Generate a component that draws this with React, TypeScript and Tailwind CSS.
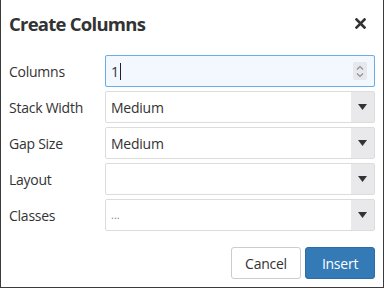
import React from "react";

const fields = [
  { label: "Stack Width", value: "Medium" },
  { label: "Gap Size", value: "Medium" },
  { label: "Layout", value: "" },
  { label: "Classes", value: "..." },
];

function SelectField({ value }: { value: string }) {
  return (
    <div className="flex h-[32px] flex-1 items-stretch rounded-[2px] border border-[#dcdcdc] bg-white">
      <div
        className={
          value === "..."
            ? "flex flex-1 items-center px-[5px] text-[11px] text-[#888]"
            : "flex flex-1 items-center px-[5px] text-[14px] tracking-[-0.25px] text-[#333]"
        }
      >
        {value}
      </div>
      <div className="flex w-[23px] items-center justify-center bg-[#e9e9ec]">
        <svg width="9" height="6" viewBox="0 0 9 6">
          <path d="M0 0h9L4.5 6z" fill="#333" />
        </svg>
      </div>
    </div>
  );
}

export default function App() {
  return (
    <div
      className="flex h-[288px] w-[384px] bg-[#3b3b3b]"
      style={{ fontFamily: '"Open Sans", "Noto Sans", sans-serif' }}
    >
      <div className="ml-px flex h-[287px] w-[382px] flex-col bg-white px-2">
        <div className="flex h-[47px] items-center justify-between">
          <h1 className="text-[18.5px] font-bold tracking-[-0.75px] text-[#333]">Create Columns</h1>
          <button className="mr-[9px] text-[#333]">
            <svg width="11" height="11" viewBox="0 0 11 11">
              <path d="M1.5 1.5l8 8M9.5 1.5l-8 8" stroke="#333" strokeWidth="2.6" strokeLinecap="square" />
            </svg>
          </button>
        </div>

        <div className="mt-2 flex flex-col gap-1">
          <div className="flex items-center">
            <label className="w-[96px] text-[14px] tracking-[-0.25px] text-[#333]">Columns</label>
            <div className="flex h-[32px] flex-1 items-center rounded-[2px] border border-[#66aee6] bg-[#f2f8fd] pl-[5px] pr-[7px]">
              <span className="text-[14px] text-[#333]">1</span>
              <span className="ml-px h-[17px] w-px bg-[#222]" />
              <div className="ml-auto flex h-[18px] w-[14px] flex-col items-center justify-center gap-[3px] rounded-[2px] bg-[#e6e8ec]">
                <svg width="8" height="5" viewBox="0 0 8 5">
                  <path d="M1 4.5L4 1.5L7 4.5" stroke="#8a8f99" strokeWidth="1.2" fill="none" />
                </svg>
                <svg width="8" height="5" viewBox="0 0 8 5">
                  <path d="M1 0.5L4 3.5L7 0.5" stroke="#8a8f99" strokeWidth="1.2" fill="none" />
                </svg>
              </div>
            </div>
          </div>
          {fields.map((f) => (
            <div key={f.label} className="flex items-center">
              <label className="w-[96px] text-[14px] tracking-[-0.25px] text-[#333]">{f.label}</label>
              <SelectField value={f.value} />
            </div>
          ))}
        </div>

        <div className="mt-4 flex justify-end gap-1">
          <button className="h-[32px] w-[70px] rounded-[3px] border border-[#ccc] bg-white text-[14px] tracking-[-0.25px] text-[#333]">
            Cancel
          </button>
          <button className="h-[32px] w-[70px] rounded-[3px] border border-[#2e6da4] bg-[#337ab7] text-[14px] tracking-[-0.25px] text-white">
            Insert
          </button>
        </div>
      </div>
    </div>
  );
}
